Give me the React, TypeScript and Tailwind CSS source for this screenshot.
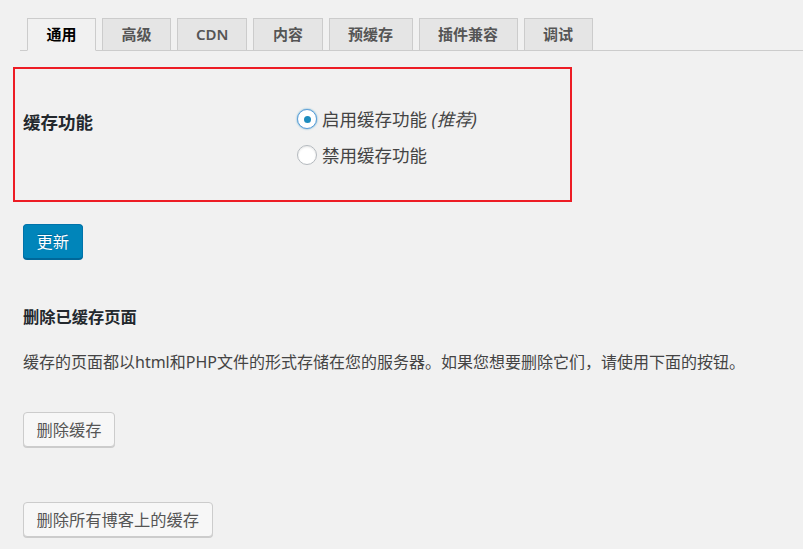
const tabs = ["通用", "高级", "CDN", "内容", "预缓存", "插件兼容", "调试"];

function Radio({ checked }: { checked?: boolean }) {
  return (
    <span
      className={
        checked
          ? "relative mr-[5px] grid h-[20px] w-[20px] shrink-0 place-items-center rounded-full border border-[#5b9dd9] bg-white shadow-[0_0_2px_rgba(30,140,190,0.8)]"
          : "relative mr-[5px] grid h-[20px] w-[20px] shrink-0 place-items-center rounded-full border border-[#b4b9be] bg-white shadow-[inset_0_1px_2px_rgba(0,0,0,0.1)]"
      }
    >
      {checked ? <span className="h-[7px] w-[7px] rounded-full bg-[#1e8cbe]" /> : null}
    </span>
  );
}

export default function App() {
  return (
    <div
      className="min-h-[549px] w-full bg-[#f1f1f1] text-[#444]"
      style={{ fontFamily: '"Noto Sans", "Noto Sans CJK SC", sans-serif' }}
    >
      {/* tabs */}
      <div className="ml-[20px] flex gap-[6px] border-b border-[#ccc] pl-[7px] pt-[18px]">
        {tabs.map((tab, i) => (
          <div
            key={tab}
            className={
              i === 0
                ? "-mb-px flex h-[33px] items-center border border-[#ccc] border-b-[#f1f1f1] bg-[#f1f1f1] px-[18.5px] text-[15px] font-semibold text-black"
                : tab === "CDN"
                  ? "-mb-px flex h-[33px] items-center border border-[#ccc] bg-[#e5e5e5] px-[18px] text-[15px] font-semibold text-[#555]"
                  : "-mb-px flex h-[33px] items-center border border-[#ccc] bg-[#e5e5e5] px-[18.5px] text-[15px] font-semibold text-[#555]"
            }
          >
            {tab}
          </div>
        ))}
      </div>

      {/* highlighted settings row */}
      <div className="ml-[13px] mt-[16px] flex h-[135px] w-[559px] border-2 border-[#ed1c24] pl-[8px] pt-[32px]">
        <div className="w-[274px] pt-[3px] text-[17.5px] font-semibold leading-[36px] text-[#23282d]">
          缓存功能
        </div>
        <div className="flex flex-col text-[17.5px]">
          <label className="flex h-[36px] items-center">
            <Radio checked />
            <span>
              启用缓存功能 <em>(推荐)</em>
            </span>
          </label>
          <label className="flex h-[36px] items-center">
            <Radio />
            <span>禁用缓存功能</span>
          </label>
        </div>
      </div>

      <div className="px-[23px]">
        <button
          type="button"
          className="mt-[22px] h-[35px] rounded-[4px] border border-[#0073aa] border-b-[#006799] bg-[#0085ba] px-[12.5px] text-[16.25px] leading-[32px] text-white shadow-[0_1px_0_#006799] [text-shadow:0_-1px_1px_#006799]"
        >
          更新
        </button>

        <h3 className="mt-[46px] text-[16.25px] font-semibold leading-[24px] text-[#23282d]">
          删除已缓存页面
        </h3>
        <p className="mt-[21px] text-[16px] leading-[24px]">
          缓存的页面都以html和PHP文件的形式存储在您的服务器。如果您想要删除它们，请使用下面的按钮。
        </p>

        <button
          type="button"
          className="mt-[38px] block h-[35px] rounded-[4px] border border-[#ccc] bg-[#f7f7f7] px-[12.5px] text-[16.25px] leading-[32px] text-[#555] shadow-[0_1px_0_#ccc]"
        >
          删除缓存
        </button>
        <button
          type="button"
          className="mt-[55px] block h-[35px] rounded-[4px] border border-[#ccc] bg-[#f7f7f7] px-[12.5px] text-[16.25px] leading-[32px] text-[#555] shadow-[0_1px_0_#ccc]"
        >
          删除所有博客上的缓存
        </button>
      </div>
    </div>
  );
}
